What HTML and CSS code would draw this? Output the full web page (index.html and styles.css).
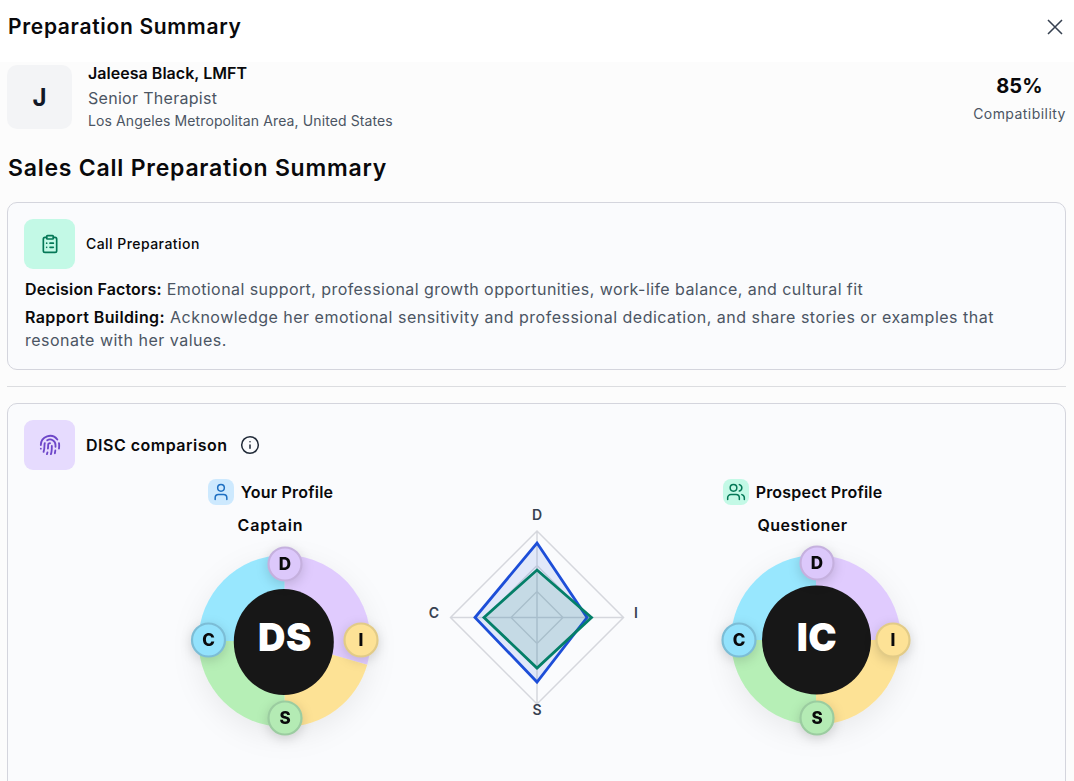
FILE: index.html
```html
<!DOCTYPE html>
<html lang="en">
<head>
<meta charset="utf-8">
<title>Preparation Summary</title>
<link rel="stylesheet" href="styles.css">
</head>
<body>
<header class="topbar">
  <h1 class="title">Preparation Summary</h1>
  <svg class="close" viewBox="0 0 24 24" width="28" height="28"><path d="M18 6 6 18M6 6l12 12"/></svg>
</header>
<main class="content">
  <section class="person">
    <div class="avatar">J</div>
    <div class="who">
      <div class="name">Jaleesa Black, LMFT</div>
      <div class="role">Senior Therapist</div>
      <div class="place">Los Angeles Metropolitan Area, United States</div>
    </div>
    <div class="score">
      <div class="pct">85%</div>
      <div class="compat">Compatibility</div>
    </div>
  </section>
  <h2 class="heading">Sales Call Preparation Summary</h2>
  <section class="card card-prep">
    <div class="card-head">
      <div class="icobox ico-green">
        <svg class="ico" viewBox="0 0 24 24" width="20" height="20"><rect x="8" y="2" width="8" height="4" rx="1"/><path d="M16 4h2a2 2 0 0 1 2 2v14a2 2 0 0 1-2 2H6a2 2 0 0 1-2-2V6a2 2 0 0 1 2-2h2M12 11h4M12 16h4M8 11h.01M8 16h.01"/></svg>
      </div>
      <div class="card-title">Call Preparation</div>
    </div>
    <p class="line line-first"><b class="lbl lbl-df">Decision Factors:</b> Emotional support, professional growth opportunities, work-life balance, and cultural fit</p>
    <p class="line line-wrap"><b class="lbl lbl-rb">Rapport Building:</b> Acknowledge her emotional sensitivity and professional dedication, and share stories or examples that resonate with her values.</p>
  </section>
  <hr class="rule">
  <section class="card card-disc">
    <div class="card-head">
      <div class="icobox ico-purple">
        <svg class="ico" viewBox="0 0 24 24" width="22" height="22"><path d="M12 10a2 2 0 0 0-2 2c0 1.02-.1 2.51-.26 4M14 13.12c0 2.38 0 6.38-1 8.88M17.29 21.02c.12-.6.43-2.3.5-3.02M2 12a10 10 0 0 1 18-6M2 16h.01M21.8 16c.2-2 .131-5.354 0-6M5 19.5C5.5 18 6 15 6 12a6 6 0 0 1 .34-2M8.65 22c.21-.66.45-1.32.57-2M9 6.8a6 6 0 0 1 9 5.2v2"/></svg>
      </div>
      <div class="card-title disc-title">DISC comparison</div>
      <svg class="info" viewBox="0 0 24 24" width="20" height="20"><circle cx="12" cy="12" r="10"/><path d="M12 16v-4M12 8h.01"/></svg>
    </div>
    <div class="compare">
      <div class="profile">
        <div class="p-head">
          <div class="mini mini-blue"><svg class="mini-ico" viewBox="0 0 24 24" width="20" height="20"><path d="M19 21v-2a4 4 0 0 0-4-4H9a4 4 0 0 0-4 4v2"/><circle cx="12" cy="7" r="4"/></svg></div>
          <span class="p-label">Your Profile</span>
        </div>
        <div class="p-type p-type-wide">Captain</div>
        <svg class="donut" viewBox="0 0 230 230" width="230" height="230">
          <g class="wheel">
            <path class="s-d" d="M128.500 111V25A86 86 0 0 1 211.200 134.700Z"/>
            <path class="s-i" d="M128.500 111L211.200 134.700A86 86 0 0 1 128.500 197Z"/>
            <path class="s-s" d="M128.500 111V197A86 86 0 0 1 42.500 111Z"/>
            <path class="s-c" d="M128.500 111H42.500A86 86 0 0 1 128.500 25Z"/>
          </g>
          <ellipse class="core" cx="127.800" cy="112" rx="50" ry="53"/>
          <text class="core-t" x="129" y="121">DS</text>
          <g class="badge b-d"><circle cx="129" cy="34" r="16.500"/><text x="129" y="39.500">D</text></g>
          <g class="badge b-i"><circle cx="205" cy="110" r="16.500"/><text x="205" y="115.500">I</text></g>
          <g class="badge b-s"><circle cx="129" cy="188" r="16.500"/><text x="129" y="193.500">S</text></g>
          <g class="badge b-c"><circle cx="52.500" cy="110" r="16.500"/><text x="52.500" y="115.500">C</text></g>
        </svg>
      </div>
      <svg class="radar" viewBox="0 0 230 230" width="230" height="230">
        <path class="grid" d="M115 31 201.500 117.500 115 204 28.500 117.500ZM115 65.500 167 117.500 115 169.500 63 117.500ZM115 91.500 141 117.500 115 143.500 89 117.500ZM115 31V204M28.500 117.500H201.500"/>
        <path class="r-blue" d="M115 43 165 117.500 115 182 53 117.500Z"/>
        <path class="r-green" d="M115 70 169.500 117.500 115 168 62 117.500Z"/>
        <text class="r-t" x="115" y="20">D</text>
        <text class="r-t" x="214" y="118">I</text>
        <text class="r-t" x="115" y="215">S</text>
        <text class="r-t" x="12" y="118">C</text>
      </svg>
      <div class="profile">
        <div class="p-head">
          <div class="mini mini-green"><svg class="mini-ico-g" viewBox="0 0 24 24" width="20" height="20"><path d="M16 21v-2a4 4 0 0 0-4-4H6a4 4 0 0 0-4 4v2"/><circle cx="9" cy="7" r="4"/><path d="M22 21v-2a4 4 0 0 0-3-3.870M16 3.130a4 4 0 0 1 0 7.750"/></svg></div>
          <span class="p-label">Prospect Profile</span>
        </div>
        <div class="p-type">Questioner</div>
        <svg class="donut" viewBox="0 0 230 230" width="230" height="230">
          <g class="wheel">
            <path class="s-d" d="M128 110V25A85 85 0 0 1 213 110Z"/>
            <path class="s-i" d="M128 110H213A85 85 0 0 1 128 195Z"/>
            <path class="s-s" d="M128 110V195A85 85 0 0 1 43 110Z"/>
            <path class="s-c" d="M128 110H43A85 85 0 0 1 128 25Z"/>
          </g>
          <circle class="core" cx="128.500" cy="110" r="54.500"/>
          <text class="core-t" x="129" y="121">IC</text>
          <g class="badge b-d"><circle cx="129" cy="33" r="16.500"/><text x="129" y="38.500">D</text></g>
          <g class="badge b-i"><circle cx="205" cy="110" r="16.500"/><text x="205" y="115.500">I</text></g>
          <g class="badge b-s"><circle cx="129" cy="188" r="16.500"/><text x="129" y="193.500">S</text></g>
          <g class="badge b-c"><circle cx="51" cy="110" r="16.500"/><text x="51" y="115.500">C</text></g>
        </svg>
      </div>
    </div>
  </section>
</main>
</body>
</html>
```
FILE: styles.css
```css
* { box-sizing: border-box; }
html, body { margin: 0; height: 781px; overflow: hidden; }
body { background: #fcfcfc; color: #030712; font-family: Inter, "Noto Sans", sans-serif; }

.topbar { height: 62px; background: #fff; display: flex; align-items: center; justify-content: space-between; padding: 0 8px 9px; }
.title { margin: 0; font-size: 21px; font-weight: 600; letter-spacing: .68px; color: #09090b; }
.close { fill: none; stroke: #374151; stroke-width: 1.300; margin-right: -3px; }

.content { padding: 3px 8px 0 7px; height: 719px; overflow: hidden; }
.person { display: flex; align-items: flex-start; height: 64px; }
.avatar { width: 65px; height: 64px; border-radius: 10px; background: #f3f4f6; display: flex; align-items: center; justify-content: center; font-size: 24px; font-weight: 700; color: #111827; flex: none; }
.who { margin-left: 16px; flex: 1; }
.name { font-size: 16px; font-weight: 600; line-height: 17px; letter-spacing: .03px; color: #09090b; }
.role { font-size: 16px; line-height: 24px; margin-top: 4px; color: #4b5563; letter-spacing: .3px; }
.place { font-size: 14px; line-height: 18px; margin-top: 2px; color: #4b5563; letter-spacing: .11px; }
.score { width: 93px; text-align: center; margin-top: 9px; }
.pct { font-size: 20px; font-weight: 700; line-height: 24px; letter-spacing: .2px; color: #09090b; }
.compat { font-size: 14px; line-height: 20px; margin-top: 6px; color: #4b5563; white-space: nowrap; letter-spacing: .45px; }

.heading { margin: 24px 0 0 1px; font-size: 23px; font-weight: 600; line-height: 30px; letter-spacing: .77px; color: #09090b; }

.card { border: 1px solid #d4d5dd; border-radius: 10px; background: #fafbfd; padding: 16px; }
.card-prep { margin-top: 19px; height: 168px; }
.card-disc { height: 420px; }
.card-head { display: flex; align-items: center; }
.icobox { width: 51px; height: 50px; border-radius: 9px; display: flex; align-items: center; justify-content: center; flex: none; }
.ico { fill: none; stroke-width: 2; stroke-linecap: round; stroke-linejoin: round; }
.ico-green { background: #c3f9e6; }
.ico-green .ico { stroke: #047857; }
.ico-purple { background: #e6dbfe; }
.ico-purple .ico { stroke: #6d46c9; stroke-width: 2; }
.card-title { margin: 0 0 2px 11px; font-size: 14px; font-weight: 500; color: #09090b; letter-spacing: .45px; }
.disc-title { margin-bottom: 0; font-size: 16px; font-weight: 600; letter-spacing: .5px; }
.info { margin-left: 12px; fill: none; stroke: #1f2937; stroke-width: 1.800; stroke-linecap: round; }

.line { margin: 0 0 0 1px; font-size: 16px; line-height: 23px; color: #4b5563; letter-spacing: .43px; }
.line-first { margin-top: 9px; }
.line-wrap { margin-top: 5px; letter-spacing: .49px; }
.lbl { font-weight: 600; color: #09090b; }
.lbl-df { letter-spacing: .15px; }
.lbl-rb { letter-spacing: .39px; }

.rule { border: 0; border-top: 1px solid #dcdde0; margin: 16px 0; }

.compare { display: flex; justify-content: center; gap: 36px; margin-top: 9px; }
.profile { width: 230px; display: flex; flex-direction: column; align-items: center; flex: none; }
.p-head { display: flex; align-items: center; gap: 7px; height: 26px; }
.mini { width: 26px; height: 26px; border-radius: 8px; display: flex; align-items: center; justify-content: center; }
.mini-blue { background: #cde9fe; }
.mini-green { background: #c3f9e6; }
.mini-ico { fill: none; stroke: #1d6fc2; stroke-width: 1.800; stroke-linecap: round; stroke-linejoin: round; }
.mini-ico-g { fill: none; stroke: #047857; stroke-width: 1.800; stroke-linecap: round; stroke-linejoin: round; }
.p-label { font-size: 16px; font-weight: 600; color: #09090b; letter-spacing: .2px; white-space: nowrap; }
.p-type { font-size: 16px; font-weight: 600; line-height: 24px; margin-top: 8px; color: #09090b; letter-spacing: .45px; }
.p-type-wide { letter-spacing: .85px; }
.donut { display: block; overflow: visible; margin-top: -7px; }
.wheel { filter: drop-shadow(0 8px 14px rgba(0,0,0,.07)); }
.s-d { fill: #e0cbfe; }
.s-i { fill: #fde295; }
.s-s { fill: #b6efb6; }
.s-c { fill: #98e7fe; }
.core { fill: #171717; }
.core-t { fill: #fff; font-size: 38px; font-weight: 900; text-anchor: middle; letter-spacing: .5px; }
.badge { filter: drop-shadow(0 3px 6px rgba(0,0,0,.15)); }
.badge circle { stroke-width: 2.200; }
.badge text { font-size: 17px; font-weight: 800; text-anchor: middle; fill: #09090b; }
.b-d circle { fill: #dcc8fb; stroke: #c5b0de; }
.b-i circle { fill: #fde296; stroke: #e2cb87; }
.b-s circle { fill: #b4ebb4; stroke: #9bcca0; }
.b-c circle { fill: #93e2fc; stroke: #7cbdd6; }

.radar { display: block; flex: none; margin-top: 21px; overflow: visible; }
.grid { fill: none; stroke: #d5d7dd; stroke-width: 1.500; }
.r-blue { fill: rgba(29,78,216,.11); stroke: #1d4ed8; stroke-width: 2.800; }
.r-green { fill: rgba(4,120,87,.12); stroke: #047f68; stroke-width: 2.800; }
.r-t { font-size: 14px; font-weight: 600; text-anchor: middle; fill: #374151; }
```
